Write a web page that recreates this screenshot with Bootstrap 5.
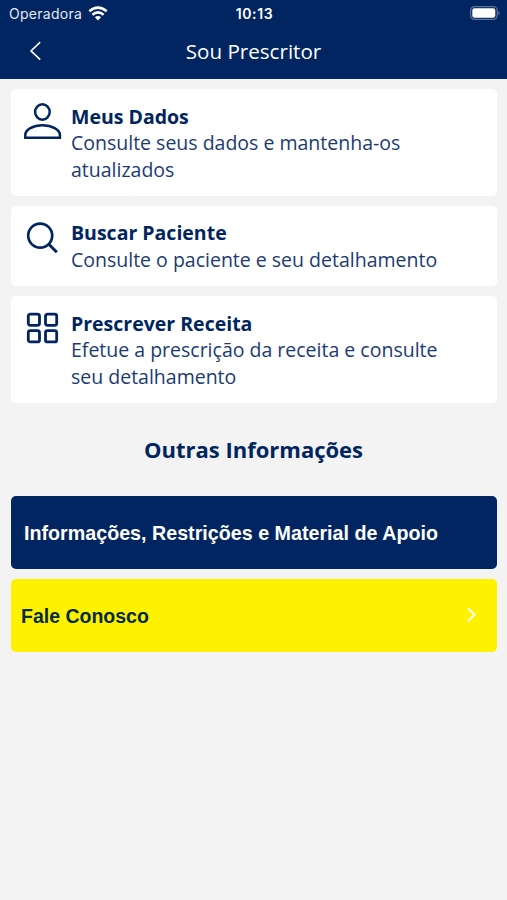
<!DOCTYPE html>
<html lang="pt-BR">
<head>
<meta charset="utf-8">
<meta name="viewport" content="width=device-width, initial-scale=1">
<title>Sou Prescritor</title>
<link href="https://cdn.jsdelivr.net/npm/bootstrap@5.3.0/dist/css/bootstrap.min.css" rel="stylesheet">
<style>
:root { --navy: #002561; --yellow: #fff200; }
body { background: #f3f3f3; color: var(--navy); font-family: "Open Sans", "Noto Sans", sans-serif; min-height: 900px; }
svg { display: block; fill: none; stroke: currentColor; }
.app-header { background: var(--navy); height: 79px; }
.status-bar { height: 27px; font: 14px/27px Inter, sans-serif; padding: 0 7px 0 9px; }
.status-bar > * { flex: 1 1 0; }
.carrier { letter-spacing: .27px; color: #e4e9f2; }
.wifi { margin-left: 6px; margin-bottom: 1px; }
.status-time { font-weight: 600; letter-spacing: .65px; }
.battery { margin-bottom: 1px; }
.title-bar { height: 50px; padding: 0 29px; }
.title-bar h1 { font-size: 20.6px; line-height: 50px; padding-bottom: 2px; }
.title-side { width: 14px; margin-bottom: 3px; }
.menu-list { padding: 10px 10px 0 11px; gap: 9.8px; }
.menu-item { border: 0; border-radius: 5px; padding: 14px 10px 12.6px 13px; color: var(--navy); font-size: 19.5px; line-height: 26.6px; }
.menu-item svg { width: 38px; height: 38px; margin-right: 9px; flex: none; }
.menu-item div { padding-top: .6px; }
.menu-item strong { font-weight: 700; }
.menu-item p { color: #1c3b73; }
.section-title { font-size: 22px; font-weight: 700; line-height: 30px; margin: 31px 0 32px; }
.action { height: 73px; border: 0; border-radius: 5px; font: 700 19.7px/26px "Liberation Sans", Arial, sans-serif; }
.action span { padding-top: 2px; }
.action-info { background: var(--navy); padding: 0 13px; }
.action-contact { background: var(--yellow); color: #062b42; font-size: 19.5px; padding: 0 20px 0 10px; }
.action-list { padding: 0 10px 0 11px; gap: 10px; }
</style>
<script src="https://cdn.jsdelivr.net/npm/bootstrap@5.3.0/dist/js/bootstrap.bundle.min.js"></script>
</head>
<body>
<header class="app-header text-white">
  <div class="status-bar d-flex align-items-center">
    <div class="d-flex align-items-center"><span class="carrier">Operadora</span>
      <svg class="wifi" width="20" height="15" viewBox="0 0 20 15" stroke-width="2.5"><path d="M1.3 5.3Q10-2 18.7 5.3M4.4 8.7Q10 4 15.6 8.7"/><path d="M6.9 11.2Q10 8.6 13.1 11.2L10 14.4z" fill="currentColor" stroke="none"/></svg>
    </div>
    <div class="status-time text-center">10:13</div>
    <div class="d-flex justify-content-end">
      <svg class="battery" width="30" height="14" viewBox="0 0 30 14"><rect x=".6" y=".6" width="26.6" height="12.8" rx="4" stroke="#5c739c" stroke-width="1.2"/><rect x="2.3" y="2.3" width="23" height="9.4" rx="2.2" fill="#fff" stroke="none"/><path d="M28.4 5v4q1.4-.6 1.4-2t-1.4-2z" fill="#5c739c" stroke="none"/></svg>
    </div>
  </div>
  <div class="title-bar d-flex align-items-center justify-content-between">
    <div class="title-side"><svg width="14" height="20" viewBox="0 0 14 20" stroke-width="1.6"><path d="M11.2 1.2 2 9.9l9.2 8.8"/></svg></div>
    <h1 class="m-0 fw-normal">Sou Prescritor</h1>
    <div class="title-side"></div>
  </div>
</header>
<main>
  <div class="menu-list d-flex flex-column">
    <a href="#" class="card menu-item flex-row text-decoration-none">
      <svg viewBox="0 0 38 38" stroke-width="2.5"><ellipse cx="18.4" cy="9" rx="7.3" ry="7.7"/><path d="M1.3 34.8V32C1.3 26.7 9 22.3 18.4 22.3S35.9 26.7 35.9 32v2.8z"/></svg>
      <div><strong>Meus Dados</strong><p class="m-0">Consulte seus dados e mantenha-os<br>atualizados</p></div>
    </a>
    <a href="#" class="card menu-item flex-row text-decoration-none">
      <svg viewBox="0 0 38 38" stroke-width="2.7"><circle cx="16.2" cy="15.6" r="12"/><path d="M24.8 24.2l8 8" stroke-width="3"/></svg>
      <div><strong>Buscar Paciente</strong><p class="m-0">Consulte o paciente e seu detalhamento</p></div>
    </a>
    <a href="#" class="card menu-item flex-row text-decoration-none">
      <svg viewBox="0 0 38 38" stroke-width="2.8"><rect x="4.3" y="4.1" width="11.2" height="11.2" rx="2"/><rect x="21.5" y="4.1" width="11.2" height="11.2" rx="2"/><rect x="4.3" y="20.7" width="11.2" height="11.2" rx="2"/><rect x="21.5" y="20.7" width="11.2" height="11.2" rx="2"/></svg>
      <div><strong>Prescrever Receita</strong><p class="m-0">Efetue a prescrição da receita e consulte<br>seu detalhamento</p></div>
    </a>
  </div>
  <h2 class="section-title text-center">Outras Informações</h2>
  <div class="action-list d-flex flex-column">
    <a href="#" class="action action-info d-flex align-items-center text-white text-decoration-none"><span>Informações, Restrições e Material de Apoio</span></a>
    <a href="#" class="action action-contact d-flex align-items-center justify-content-between text-decoration-none"><span>Fale Conosco</span>
      <svg class="text-white" width="11" height="16" viewBox="0 0 11 16" stroke-width="2"><path d="M2 1.2 8.5 7.7 2 14.2"/></svg>
    </a>
  </div>
</main>
</body>
</html>
